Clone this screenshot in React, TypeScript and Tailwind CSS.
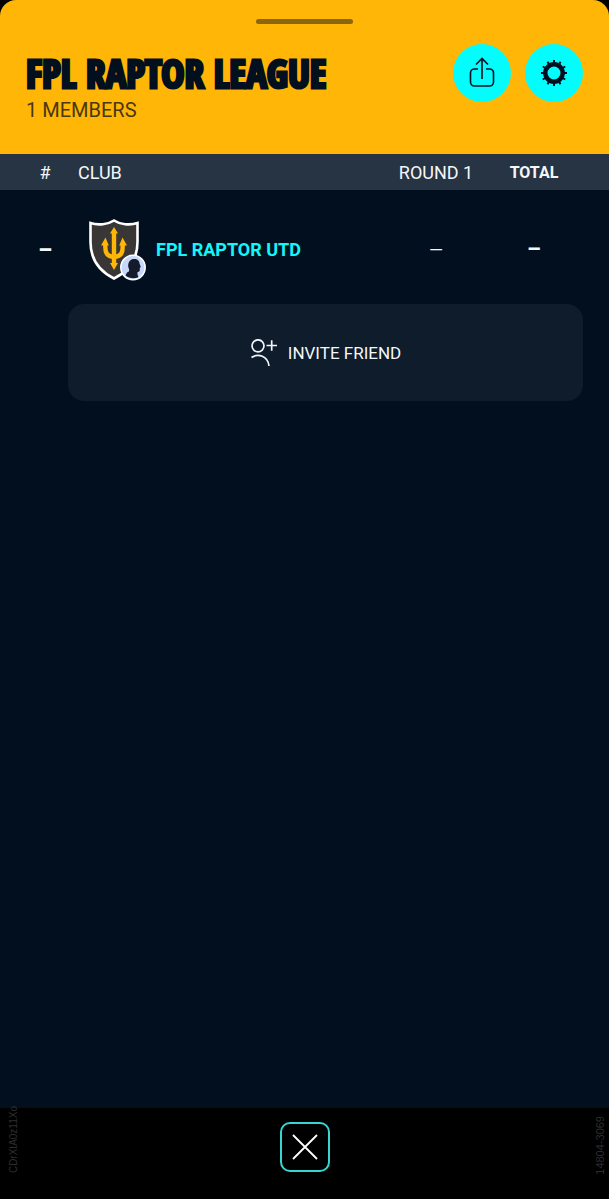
type Member = {
  rank: string;
  name: string;
  round: string;
  total: string;
};

const members: Member[] = [{ rank: "–", name: "FPL RAPTOR UTD", round: "—", total: "–" }];

function ShareIcon() {
  return (
    <svg className="h-8 w-8" viewBox="0 0 32 32" fill="none" stroke="#020f1f" strokeWidth="1.6" aria-hidden>
      <path d="M12 12H8.5A4 4 0 0 0 4.500 16V25A4 4 0 0 0 8.500 29H23.500A4 4 0 0 0 27.500 25V16A4 4 0 0 0 23.500 12H20" />
      <path d="M16 22V1.500M10 7.500L16 1.500L22 7.500" />
    </svg>
  );
}

function GearIcon() {
  const teeth = Array.from({ length: 12 }, (_, i) => i * 30);
  return (
    <svg className="h-7 w-7" viewBox="0 0 28 28" fill="none" stroke="#020f1f" aria-hidden>
      <circle cx="14" cy="14" r="8.7" strokeWidth="4.4" />
      {teeth.map((a) => (
        <path key={a} d="M14 1V5" strokeWidth="2" transform={`rotate(${a} 14 14)`} />
      ))}
    </svg>
  );
}

function ClubCrest() {
  return (
    <svg className="h-[62px] w-[60px] shrink-0" viewBox="0 0 60 62" aria-hidden>
      <path
        d="M26 1.5C20 5.5 10 6.5 2.5 4V23C2.500 40 11 52 26 59.500C41 52 49.500 40 49.500 23V4C42 6.500 32 5.500 26 1.500Z"
        fill="#393735"
        stroke="#fff"
        strokeWidth="2.6"
      />
      <path d="M17.500 25C16.500 34.500 19.500 37.500 26 38C32.500 37.500 35.500 34.500 34.500 25" fill="none" stroke="#ffb606" strokeWidth="4.4" />
      <path
        d="M26 8L30 14.500H28.200V44H30L26 51L22 44H23.800V14.500H22ZM17.500 18.500L20.800 26.500H13ZM34.500 18.500L39 26.500H31.200Z"
        fill="#ffb606"
      />
      <circle cx="45" cy="48.5" r="12.2" fill="#c5d7fb" stroke="#fff" strokeWidth="1.5" />
      <path
        d="M37.500 56.500L39 53.500C41 53 41.500 51.500 41 50C39.200 46 40.500 41 45 40C49 39.500 51.500 41.500 51.500 44.500L52.800 48L51.800 48.800V51.500C51.500 53 50 52.800 49.500 53.200C49.200 55 49.800 56.500 50.500 58.200C46 60 41 59.500 37.500 56.500Z"
        fill="#151b2b"
      />
    </svg>
  );
}

function InviteIcon() {
  return (
    <svg className="h-7 w-7" viewBox="0 0 28 28" fill="none" stroke="#f1f6fb" strokeWidth="1.7" aria-hidden>
      <circle cx="8" cy="6.8" r="6" />
      <path d="M1.500 18.500C8 14 18 17 19 27M16.500 6.500H27M21.700 1.300V11.700" />
    </svg>
  );
}

export default function App() {
  return (
    <div className="flex min-h-screen flex-col bg-black font-['Roboto',sans-serif] text-[18px] leading-6 text-[#f4f7fa]">
      <header className="rounded-t-2xl bg-[#ffb606] px-[26px] pt-[19px] pb-8 text-[#020f1f]">
        <div className="mx-auto h-[5px] w-[97px] rounded-full bg-[#8a660f]" />
        <div className="mt-5 flex items-start justify-between gap-4">
          <div className="pt-1">
            <h1 className="font-['Open_Sans_Condensed','Noto_Sans_ExtraCondensed','Roboto_Condensed','Liberation_Sans_Narrow',sans-serif] text-[39px] leading-[50px] font-black whitespace-nowrap [-webkit-text-stroke:3px_#020f1f]">
              FPL RAPTOR LEAGUE
            </h1>
            <p className="text-[20px] leading-6 text-[#493811]">1 MEMBERS</p>
          </div>
          <div className="flex gap-[14px]">
            <button
              type="button"
              aria-label="Share league"
              className="flex size-[58px] items-center justify-center rounded-full bg-[#03fdfd]"
            >
              <ShareIcon />
            </button>
            <button
              type="button"
              aria-label="League settings"
              className="flex size-[58px] items-center justify-center rounded-full bg-[#03fdfd]"
            >
              <GearIcon />
            </button>
          </div>
        </div>
      </header>

      <main className="flex-1 bg-[#020f1f]">
        <table className="w-full table-fixed border-collapse">
          <thead>
            <tr className="h-9 bg-[#273443]">
              <th scope="col" className="w-[78px] pt-[2px] pl-3 font-normal">
                #
              </th>
              <th scope="col" className="pt-[2px] text-left font-normal">
                CLUB
              </th>
              <th scope="col" className="w-[98px] pt-[2px] font-normal">
                ROUND 1
              </th>
              <th scope="col" className="w-[124px] pt-[2px] pr-[26px] text-[16px] font-bold">
                TOTAL
              </th>
            </tr>
          </thead>
          <tbody>
            {members.map((m) => (
              <tr key={m.name} className="h-[114px] text-center">
                <td className="pt-[6px] pl-3 text-[22px] font-black">{m.rank}</td>
                <td className="pt-[6px] pl-[10px]">
                  <div className="flex items-center gap-2">
                    <ClubCrest />
                    <span className="font-bold whitespace-nowrap text-[#14f6f8]">{m.name}</span>
                  </div>
                </td>
                <td className="pt-[6px]">{m.round}</td>
                <td className="pt-[6px] pr-[26px] text-[22px] font-bold">{m.total}</td>
              </tr>
            ))}
          </tbody>
        </table>
        <div className="flex pr-[26px] pl-[68px]">
          <button
            type="button"
            className="flex h-[97px] flex-1 items-center justify-center gap-[10px] rounded-2xl bg-[#0e1c2b] text-[17px]"
          >
            <InviteIcon />
            INVITE FRIEND
          </button>
        </div>
      </main>

      <footer className="relative flex h-[91px] items-start justify-center pt-[14px]">
        <span className="absolute bottom-[26px] left-2 rotate-180 font-['Liberation_Sans',sans-serif] text-[10px] leading-3 text-[#2d2d2d] [writing-mode:vertical-rl]">
          CDrXtA0z11Xo
        </span>
        <button
          type="button"
          aria-label="Close"
          className="flex size-[50px] items-center justify-center rounded-[10px] border-2 border-[#35d6d4]"
        >
          <svg className="h-7 w-7" viewBox="0 0 28 28" stroke="#fff" strokeWidth="1.8" aria-hidden>
            <path d="M2 2L26 26M26 2L2 26" />
          </svg>
        </button>
        <span className="absolute right-[3px] bottom-6 rotate-180 font-['Liberation_Sans',sans-serif] text-[11px] leading-3 text-[#2d2d2d] [writing-mode:vertical-rl]">
          14804-3069
        </span>
      </footer>
    </div>
  );
}
